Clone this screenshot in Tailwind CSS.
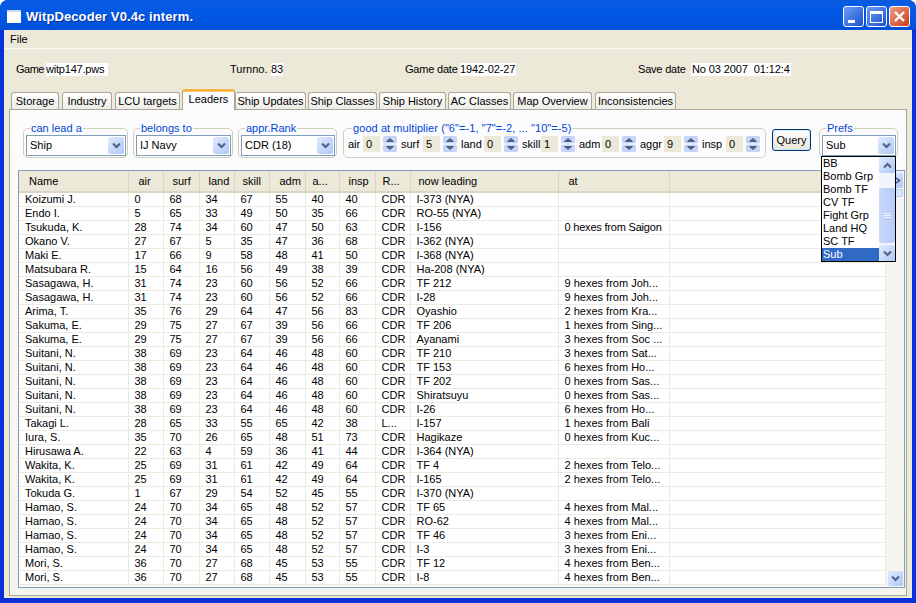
<!DOCTYPE html>
<html>
<head>
<meta charset="utf-8">
<script src="https://cdn.jsdelivr.net/npm/@tailwindcss/browser@4"></script>
</head>
<body class="m-0">
<div class="relative flex h-[603px] w-[916px] flex-col overflow-hidden rounded-t-[8px] bg-[#0831d9] font-['Liberation_Sans',sans-serif] text-[11px] leading-[13px] text-black">
  <!-- title bar -->
  <div class="flex h-[30px] shrink-0 items-center bg-gradient-to-b from-[#0a5ce0] via-[#0058e6] to-[#0350d8] pl-[7px] pr-[6px] pt-[3px]">
    <svg width="14" height="13" viewBox="0 0 14 13" class="shrink-0"><rect x="0" y="0" width="14" height="13" fill="#fff"/><rect x="0" y="0" width="14" height="2" fill="#cfd8ee"/></svg>
    <span class="ml-[5px] text-[13px] font-bold tracking-[0.1px] text-white [text-shadow:1px_1px_0_#0a2fa0]">WitpDecoder V0.4c interm.</span>
    <div class="ml-auto flex gap-[2px]">
      <div class="flex h-[21px] w-[21px] items-end rounded-[3px] border border-white bg-gradient-to-br from-[#6d9cf5] to-[#1f4fd0] pb-[3px] pl-[4px]"><div class="h-[3px] w-[7px] bg-white"></div></div>
      <div class="flex h-[21px] w-[21px] items-center justify-center rounded-[3px] border border-white bg-gradient-to-br from-[#6d9cf5] to-[#1f4fd0]"><div class="h-[12px] w-[13px] border border-t-[3px] border-white"></div></div>
      <div class="flex h-[21px] w-[21px] items-center justify-center rounded-[3px] border border-white bg-gradient-to-br from-[#ee9a80] to-[#c9391a]"><svg width="13" height="13" viewBox="0 0 13 13"><path d="M2 2 L11 11 M11 2 L2 11" stroke="#fff" stroke-width="2.4"/></svg></div>
    </div>
  </div>
  <!-- client -->
  <div class="mx-[4px] mb-[5px] flex min-h-0 flex-1 flex-col bg-[#ece9d8]">
    <div class="flex h-[19px] shrink-0 items-center border-b border-[#fbfaf5] pl-[6px]">File</div>
    <div class="flex h-[40px] shrink-0 items-center whitespace-nowrap pl-[12px]">
      <span class="w-[30px] tracking-[-0.5px]">Game</span><span class="w-[62px] overflow-hidden bg-white tracking-[-0.2px]">witp147.pws</span>
      <span class="ml-[122px] w-[41px]">Turnno.</span><span class="w-[12px] bg-white">83</span>
      <span class="ml-[122px] w-[55px] tracking-[-0.2px]">Game date</span><span class="w-[56px] overflow-hidden bg-white tracking-[-0.1px]">1942-02-27</span>
      <span class="ml-[122px] w-[53px] tracking-[-0.2px]">Save date</span><span class="w-[100px] overflow-hidden bg-white pl-[1px] tracking-[-0.1px]">No 03 2007&nbsp; 01:12:4</span>
    </div>
    <!-- tabs -->
    <div class="flex h-[21px] shrink-0 items-end pl-[7px] [&>div]:h-[18px] [&>div]:whitespace-nowrap [&>div]:rounded-t-[3px] [&>div]:border [&>div]:border-b-0 [&>div]:border-[#a9a797] [&>div]:bg-gradient-to-b [&>div]:from-white [&>div]:to-[#ecebe4] [&>div]:text-center [&>div]:leading-[17px]">
      <div class="w-[48px]">Storage</div>
      <div class="ml-[3px] w-[50px]">Industry</div>
      <div class="ml-[3px] w-[65px]">LCU targets</div>
      <div class="relative z-10 ml-[2px] !h-[21px] w-[53px] !border-[#a9a797] !border-t-[#f5b040] !bg-none !bg-[#fcfcfe] !border-t-[2px] shadow-[inset_0_1px_0_#fbc761]">Leaders</div>
      <div class="w-[71px]">Ship Updates</div>
      <div class="ml-[2px] w-[69px]">Ship Classes</div>
      <div class="ml-[2px] w-[67px]">Ship History</div>
      <div class="ml-[2px] w-[63px]">AC Classes</div>
      <div class="ml-[2px] w-[79px]">Map Overview</div>
      <div class="ml-[3px] w-[81px]">Inconsistencies</div>
    </div>
    <!-- panel -->
    <div class="relative mx-[5px] mt-[-1px] mb-[2px] flex min-h-0 flex-1 flex-col border border-[#a9a797] bg-gradient-to-b from-[#fcfcfe] to-[#f4f3ee] pl-[8px] pr-[1px]">
      <!-- filter row -->
      <div class="mt-[12px] flex h-[36px] shrink-0 items-start [&_fieldset]:h-[36px] [&_fieldset]:min-w-0 [&_fieldset]:rounded-[5px] [&_fieldset]:border [&_fieldset]:border-[#d0d0bf] [&_legend]:ml-[4px] [&_legend]:px-[1px] [&_legend]:text-[#0046d5]">
        <fieldset class="ml-[5px] w-[105px] pl-[2px]">
          <legend>can lead a</legend>
          <div class="flex h-[21px] w-[100px] items-center justify-between border border-[#7f9db9] bg-white pl-[3px] pr-[1px]">Ship
            <div class="flex h-[17px] w-[16px] items-center justify-center rounded-[2px] bg-gradient-to-br from-[#e1eafe] to-[#aec8f7]"><svg width="9" height="7" viewBox="0 0 9 7"><path d="M1 1.5 L4.5 5 L8 1.5" fill="none" stroke="#4d6185" stroke-width="2"/></svg></div>
          </div>
        </fieldset>
        <fieldset class="ml-[5px] w-[100px] pl-[2px]">
          <legend>belongs to</legend>
          <div class="flex h-[21px] w-[95px] items-center justify-between border border-[#7f9db9] bg-white pl-[3px] pr-[1px]">IJ Navy
            <div class="flex h-[17px] w-[16px] items-center justify-center rounded-[2px] bg-gradient-to-br from-[#e1eafe] to-[#aec8f7]"><svg width="9" height="7" viewBox="0 0 9 7"><path d="M1 1.5 L4.5 5 L8 1.5" fill="none" stroke="#4d6185" stroke-width="2"/></svg></div>
          </div>
        </fieldset>
        <fieldset class="ml-[5px] w-[99px] pl-[2px]">
          <legend>appr.Rank</legend>
          <div class="flex h-[21px] w-[94px] items-center justify-between border border-[#7f9db9] bg-white pl-[3px] pr-[1px]">CDR (18)
            <div class="flex h-[17px] w-[16px] items-center justify-center rounded-[2px] bg-gradient-to-br from-[#e1eafe] to-[#aec8f7]"><svg width="9" height="7" viewBox="0 0 9 7"><path d="M1 1.5 L4.5 5 L8 1.5" fill="none" stroke="#4d6185" stroke-width="2"/></svg></div>
          </div>
        </fieldset>
        <fieldset class="ml-[6px] w-[423px] pl-[4px]">
          <legend class="whitespace-nowrap tracking-[0.07px]">good at multiplier ("6"=-1, "7"=-2, ... "10"=-5)</legend>
          <div class="flex h-[18px] items-center [&>i]:h-[16px] [&>i]:w-[17px] [&>i]:bg-[#ece9d8] [&>i]:pl-[3px] [&>i]:not-italic [&>i]:leading-[16px] [&>svg]:ml-[3px] [&>svg]:mr-[4px] [&>svg]:shrink-0">
            <span class="w-[15px]">air</span><i>0</i>
            <svg width="14" height="16" viewBox="0 0 14 16"><rect width="14" height="7.5" y="0" rx="1.5" fill="#c6d5f7"/><rect width="14" height="7.5" y="8.5" rx="1.5" fill="#c6d5f7"/><path d="M3.5 5.5 L7 2.5 L10.5 5.5Z" fill="#4d6185" stroke="#4d6185"/><path d="M3.5 10.5 L7 13.5 L10.5 10.5Z" fill="#4d6185" stroke="#4d6185"/></svg>
            <span class="w-[22px]">surf</span><i>5</i>
            <svg width="14" height="16" viewBox="0 0 14 16"><rect width="14" height="7.5" y="0" rx="1.5" fill="#c6d5f7"/><rect width="14" height="7.5" y="8.5" rx="1.5" fill="#c6d5f7"/><path d="M3.5 5.5 L7 2.5 L10.5 5.5Z" fill="#4d6185" stroke="#4d6185"/><path d="M3.5 10.5 L7 13.5 L10.5 10.5Z" fill="#4d6185" stroke="#4d6185"/></svg>
            <span class="w-[23px]">land</span><i>0</i>
            <svg width="14" height="16" viewBox="0 0 14 16"><rect width="14" height="7.5" y="0" rx="1.5" fill="#c6d5f7"/><rect width="14" height="7.5" y="8.5" rx="1.5" fill="#c6d5f7"/><path d="M3.5 5.5 L7 2.5 L10.5 5.5Z" fill="#4d6185" stroke="#4d6185"/><path d="M3.5 10.5 L7 13.5 L10.5 10.5Z" fill="#4d6185" stroke="#4d6185"/></svg>
            <span class="w-[19px]">skill</span><i>1</i>
            <svg width="14" height="16" viewBox="0 0 14 16"><rect width="14" height="7.5" y="0" rx="1.5" fill="#c6d5f7"/><rect width="14" height="7.5" y="8.5" rx="1.5" fill="#c6d5f7"/><path d="M3.5 5.5 L7 2.5 L10.5 5.5Z" fill="#4d6185" stroke="#4d6185"/><path d="M3.5 10.5 L7 13.5 L10.5 10.5Z" fill="#4d6185" stroke="#4d6185"/></svg>
            <span class="w-[23px]">adm</span><i>0</i>
            <svg width="14" height="16" viewBox="0 0 14 16"><rect width="14" height="7.5" y="0" rx="1.5" fill="#c6d5f7"/><rect width="14" height="7.5" y="8.5" rx="1.5" fill="#c6d5f7"/><path d="M3.5 5.5 L7 2.5 L10.5 5.5Z" fill="#4d6185" stroke="#4d6185"/><path d="M3.5 10.5 L7 13.5 L10.5 10.5Z" fill="#4d6185" stroke="#4d6185"/></svg>
            <span class="w-[24px]">aggr</span><i>9</i>
            <svg width="14" height="16" viewBox="0 0 14 16"><rect width="14" height="7.5" y="0" rx="1.5" fill="#c6d5f7"/><rect width="14" height="7.5" y="8.5" rx="1.5" fill="#c6d5f7"/><path d="M3.5 5.5 L7 2.5 L10.5 5.5Z" fill="#4d6185" stroke="#4d6185"/><path d="M3.5 10.5 L7 13.5 L10.5 10.5Z" fill="#4d6185" stroke="#4d6185"/></svg>
            <span class="w-[24px]">insp</span><i>0</i>
            <svg width="14" height="16" viewBox="0 0 14 16"><rect width="14" height="7.5" y="0" rx="1.5" fill="#c6d5f7"/><rect width="14" height="7.5" y="8.5" rx="1.5" fill="#c6d5f7"/><path d="M3.5 5.5 L7 2.5 L10.5 5.5Z" fill="#4d6185" stroke="#4d6185"/><path d="M3.5 10.5 L7 13.5 L10.5 10.5Z" fill="#4d6185" stroke="#4d6185"/></svg>
          </div>
        </fieldset>
        <div class="ml-[6px] mt-[7px] flex h-[22px] w-[39px] items-center justify-center rounded-[3px] border border-[#003c74] bg-gradient-to-b from-white to-[#e8e6da] shadow-[inset_0_0_0_1px_#cee7ff]">Query</div>
        <fieldset class="ml-[8px] w-[79px] pl-[2px]">
          <legend>Prefs</legend>
          <div class="flex h-[21px] w-[74px] items-center justify-between border border-[#7f9db9] bg-white pl-[3px] pr-[1px]">Sub
            <div class="flex h-[17px] w-[16px] items-center justify-center rounded-[2px] bg-gradient-to-br from-[#e1eafe] to-[#aec8f7]"><svg width="9" height="7" viewBox="0 0 9 7"><path d="M1 1.5 L4.5 5 L8 1.5" fill="none" stroke="#4d6185" stroke-width="2"/></svg></div>
          </div>
        </fieldset>
      </div>
      <!-- table -->
      <div class="relative mt-[12px] mb-[7px] flex min-h-0 flex-1 border border-[#7f9db9] bg-white">
        <table class="h-fit w-[867px] shrink-0 table-fixed border-collapse [&_td]:h-[14px] [&_td]:overflow-hidden [&_td]:whitespace-nowrap [&_td]:border-r [&_td]:border-b [&_td]:border-[#ecebe0] [&_td]:pl-[6px] [&_td]:leading-[13px] [&_th]:h-[21px] [&_th]:border-r [&_th]:border-b-[2px] [&_th]:border-r-[#d8d5c4] [&_th]:border-b-[#d9d6c5] [&_th]:bg-[#ece9d8] [&_th]:text-left [&_th]:font-normal">
          <colgroup><col class="w-[109px]"><col class="w-[35px]"><col class="w-[36px]"><col class="w-[35px]"><col class="w-[35px]"><col class="w-[36px]"><col class="w-[34px]"><col class="w-[36px]"><col class="w-[35px]"><col class="w-[148px]"><col class="w-[111px]"><col></colgroup>
          <thead><tr><th class="pl-[10px]">Name</th><th class="pl-[10px]">air</th><th class="pl-[9px]">surf</th><th class="pl-[9px]">land</th><th class="pl-[8px]">skill</th><th class="pl-[10px]">adm</th><th class="pl-[7px]">a...</th><th class="pl-[9px]">insp</th><th class="pl-[7px]">R...</th><th class="pl-[8px]">now leading</th><th class="pl-[10px]">at</th><th></th></tr></thead>
          <tbody>
<tr><td>Koizumi J.</td><td>0</td><td>68</td><td>34</td><td>67</td><td>55</td><td>40</td><td>40</td><td>CDR</td><td>I-373 (NYA)</td><td></td><td></td></tr>
<tr><td>Endo I.</td><td>5</td><td>65</td><td>33</td><td>49</td><td>50</td><td>35</td><td>66</td><td>CDR</td><td>RO-55 (NYA)</td><td></td><td></td></tr>
<tr><td>Tsukuda, K.</td><td>28</td><td>74</td><td>34</td><td>60</td><td>47</td><td>50</td><td>63</td><td>CDR</td><td>I-156</td><td class="tracking-[-0.2px]">0 hexes from Saigon</td><td></td></tr>
<tr><td>Okano V.</td><td>27</td><td>67</td><td>5</td><td>35</td><td>47</td><td>36</td><td>68</td><td>CDR</td><td>I-362 (NYA)</td><td></td><td></td></tr>
<tr><td>Maki E.</td><td>17</td><td>66</td><td>9</td><td>58</td><td>48</td><td>41</td><td>50</td><td>CDR</td><td>I-368 (NYA)</td><td></td><td></td></tr>
<tr><td>Matsubara R.</td><td>15</td><td>64</td><td>16</td><td>56</td><td>49</td><td>38</td><td>39</td><td>CDR</td><td>Ha-208 (NYA)</td><td></td><td></td></tr>
<tr><td>Sasagawa, H.</td><td>31</td><td>74</td><td>23</td><td>60</td><td>56</td><td>52</td><td>66</td><td>CDR</td><td>TF 212</td><td>9 hexes from Joh...</td><td></td></tr>
<tr><td>Sasagawa, H.</td><td>31</td><td>74</td><td>23</td><td>60</td><td>56</td><td>52</td><td>66</td><td>CDR</td><td>I-28</td><td>9 hexes from Joh...</td><td></td></tr>
<tr><td>Arima, T.</td><td>35</td><td>76</td><td>29</td><td>64</td><td>47</td><td>56</td><td>83</td><td>CDR</td><td>Oyashio</td><td>2 hexes from Kra...</td><td></td></tr>
<tr><td>Sakuma, E.</td><td>29</td><td>75</td><td>27</td><td>67</td><td>39</td><td>56</td><td>66</td><td>CDR</td><td>TF 206</td><td>1 hexes from Sing...</td><td></td></tr>
<tr><td>Sakuma, E.</td><td>29</td><td>75</td><td>27</td><td>67</td><td>39</td><td>56</td><td>66</td><td>CDR</td><td>Ayanami</td><td>3 hexes from Soc ...</td><td></td></tr>
<tr><td>Suitani, N.</td><td>38</td><td>69</td><td>23</td><td>64</td><td>46</td><td>48</td><td>60</td><td>CDR</td><td>TF 210</td><td>3 hexes from Sat...</td><td></td></tr>
<tr><td>Suitani, N.</td><td>38</td><td>69</td><td>23</td><td>64</td><td>46</td><td>48</td><td>60</td><td>CDR</td><td>TF 153</td><td>6 hexes from Ho...</td><td></td></tr>
<tr><td>Suitani, N.</td><td>38</td><td>69</td><td>23</td><td>64</td><td>46</td><td>48</td><td>60</td><td>CDR</td><td>TF 202</td><td>0 hexes from Sas...</td><td></td></tr>
<tr><td>Suitani, N.</td><td>38</td><td>69</td><td>23</td><td>64</td><td>46</td><td>48</td><td>60</td><td>CDR</td><td>Shiratsuyu</td><td>0 hexes from Sas...</td><td></td></tr>
<tr><td>Suitani, N.</td><td>38</td><td>69</td><td>23</td><td>64</td><td>46</td><td>48</td><td>60</td><td>CDR</td><td>I-26</td><td>6 hexes from Ho...</td><td></td></tr>
<tr><td>Takagi L.</td><td>28</td><td>65</td><td>33</td><td>55</td><td>65</td><td>42</td><td>38</td><td>L...</td><td>I-157</td><td>1 hexes from Bali</td><td></td></tr>
<tr><td>Iura, S.</td><td>35</td><td>70</td><td>26</td><td>65</td><td>48</td><td>51</td><td>73</td><td>CDR</td><td>Hagikaze</td><td>0 hexes from Kuc...</td><td></td></tr>
<tr><td>Hirusawa A.</td><td>22</td><td>63</td><td>4</td><td>59</td><td>36</td><td>41</td><td>44</td><td>CDR</td><td>I-364 (NYA)</td><td></td><td></td></tr>
<tr><td>Wakita, K.</td><td>25</td><td>69</td><td>31</td><td>61</td><td>42</td><td>49</td><td>64</td><td>CDR</td><td>TF 4</td><td>2 hexes from Telo...</td><td></td></tr>
<tr><td>Wakita, K.</td><td>25</td><td>69</td><td>31</td><td>61</td><td>42</td><td>49</td><td>64</td><td>CDR</td><td>I-165</td><td>2 hexes from Telo...</td><td></td></tr>
<tr><td>Tokuda G.</td><td>1</td><td>67</td><td>29</td><td>54</td><td>52</td><td>45</td><td>55</td><td>CDR</td><td>I-370 (NYA)</td><td></td><td></td></tr>
<tr><td>Hamao, S.</td><td>24</td><td>70</td><td>34</td><td>65</td><td>48</td><td>52</td><td>57</td><td>CDR</td><td>TF 65</td><td>4 hexes from Mal...</td><td></td></tr>
<tr><td>Hamao, S.</td><td>24</td><td>70</td><td>34</td><td>65</td><td>48</td><td>52</td><td>57</td><td>CDR</td><td>RO-62</td><td>4 hexes from Mal...</td><td></td></tr>
<tr><td>Hamao, S.</td><td>24</td><td>70</td><td>34</td><td>65</td><td>48</td><td>52</td><td>57</td><td>CDR</td><td>TF 46</td><td>3 hexes from Eni...</td><td></td></tr>
<tr><td>Hamao, S.</td><td>24</td><td>70</td><td>34</td><td>65</td><td>48</td><td>52</td><td>57</td><td>CDR</td><td>I-3</td><td>3 hexes from Eni...</td><td></td></tr>
<tr><td>Mori, S.</td><td>36</td><td>70</td><td>27</td><td>68</td><td>45</td><td>53</td><td>55</td><td>CDR</td><td>TF 12</td><td>4 hexes from Ben...</td><td></td></tr>
<tr><td>Mori, S.</td><td>36</td><td>70</td><td>27</td><td>68</td><td>45</td><td>53</td><td>55</td><td>CDR</td><td>I-8</td><td>4 hexes from Ben...</td><td></td></tr>
          </tbody>
        </table>
        <!-- scrollbar -->
        <div class="flex min-w-0 flex-1 flex-col items-center bg-[#f5f4ee] py-[1px]">
          <div class="mt-[1px] flex h-[15px] w-[15px] items-center justify-end rounded-[2px] bg-gradient-to-br from-[#e1eafe] to-[#aec8f7] pr-[1px]"><svg width="6" height="7" viewBox="0 0 6 7"><path d="M0 1 L3.5 3.5 L0 6" fill="none" stroke="#4d6185" stroke-width="1.6"/></svg></div>
          <div class="mt-[1px] h-[8px] w-[15px] rounded-[2px] border border-[#b9ccf5] bg-[#dce6fb]"></div>
          <div class="mt-auto flex h-[15px] w-[15px] items-center justify-center rounded-[2px] bg-gradient-to-br from-[#e1eafe] to-[#aec8f7]"><svg width="9" height="7" viewBox="0 0 9 7"><path d="M1 1.5 L4.5 5 L8 1.5" fill="none" stroke="#4d6185" stroke-width="2"/></svg></div>
        </div>
      </div>
      <!-- popup list -->
      <div class="absolute left-[811px] top-[46px] z-20 flex h-[106px] w-[75px] border border-black bg-white">
        <div class="flex-1 leading-[13px] [&>div]:h-[13px] [&>div]:pl-[1px]">
          <div>BB</div><div>Bomb Grp</div><div>Bomb TF</div><div>CV TF</div><div>Fight Grp</div><div>Land HQ</div><div>SC TF</div><div class="bg-[#316ac5] text-white">Sub</div>
        </div>
        <div class="flex w-[16px] flex-col bg-[#f1f5fd]">
          <div class="flex h-[16px] items-center justify-center rounded-[2px] bg-gradient-to-br from-[#e1eafe] to-[#aec8f7]"><svg width="9" height="7" viewBox="0 0 9 7"><path d="M1 5.5 L4.5 2 L8 5.5" fill="none" stroke="#4d6185" stroke-width="2"/></svg></div>
          <div class="mt-[15px] flex h-[55px] items-center justify-center rounded-[2px] bg-gradient-to-r from-[#c9d8fb] to-[#b6cbf8]"><svg width="7" height="6" viewBox="0 0 7 6"><path d="M0 .5H7M0 2.5H7M0 4.5H7" stroke="#eef3ff"/></svg></div>
          <div class="mt-auto flex h-[16px] items-center justify-center rounded-[2px] bg-gradient-to-br from-[#e1eafe] to-[#aec8f7]"><svg width="9" height="7" viewBox="0 0 9 7"><path d="M1 1.5 L4.5 5 L8 1.5" fill="none" stroke="#4d6185" stroke-width="2"/></svg></div>
        </div>
      </div>
    </div>
  </div>
</div>
</body>
</html>
